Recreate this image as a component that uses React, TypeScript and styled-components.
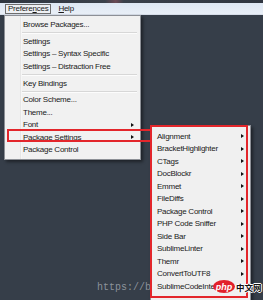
import React from 'react';
import styled, { createGlobalStyle } from 'styled-components';

const GlobalStyle = createGlobalStyle`
    html, body {
        margin: 0;
        padding: 0;
        background: #363e49;
    }
`;

const MENU_FONT = `'Liberation Sans', Arial, sans-serif`;

const Page = styled.div`
    position: relative;
    width: 263px;
    height: 300px;
    overflow: hidden;
    background: #363e49;
    font-family: ${MENU_FONT};
    font-size: 8px;
    letter-spacing: -0.25px;
    color: #1a1a1a;
`;

const TopStrip = styled.div`
    height: 3px;
    background: linear-gradient(90deg, #2f3640 0%, #3a414b 40%, #6b4a55 44%, #3a414b 47%, #2f3640 100%);
`;

const MenuBar = styled.div`
    display: flex;
    align-items: center;
    gap: 4px;
    height: 12px;
    padding-left: 5px;
    background: linear-gradient(#dde7f3, #e9eff7);
    border-bottom: 1px solid #d6dde8;
    box-sizing: border-box;
`;

const BarItem = styled.div<{ $open?: boolean }>`
    display: flex;
    align-items: center;
    height: 10px;
    padding: 0 2px;
    box-sizing: border-box;
    border: 1px solid ${(p) => (p.$open ? '#6e6e6e' : 'transparent')};
    background: ${(p) => (p.$open ? '#eef0f3' : 'transparent')};
    line-height: 8px;
    u {
        text-decoration: underline;
        text-underline-offset: 1px;
    }
`;

const Body = styled.div`
    position: relative;
    z-index: 1;
    display: flex;
    align-items: flex-start;
    padding-left: 4px;
`;

const Menu = styled.div<{ $width: number; $top: number; $left: number; $gutter?: boolean }>`
    display: flex;
    flex-direction: column;
    width: ${(p) => p.$width}px;
    margin-top: ${(p) => p.$top}px;
    margin-left: ${(p) => p.$left}px;
    box-sizing: border-box;
    border: 1px solid #8d9096;
    background: ${(p) =>
        p.$gutter
            ? 'linear-gradient(90deg, #f1f1f1 0, #f1f1f1 15px, #e6e6e6 15px, #e6e6e6 16px, #fbfbfb 16px, #f1f1f1 17px, #f1f1f1 100%)'
            : '#f0f0f0'};
    box-shadow: 2px 2px 3px rgba(0, 0, 0, 0.45);
`;

const MainList = styled.div`
    display: flex;
    flex-direction: column;
    padding: 2px 0 3px;
`;

const SubList = styled.div`
    display: flex;
    flex-direction: column;
    padding: 4px 0 20px;
`;

const Item = styled.div<{ $indent: number }>`
    display: flex;
    align-items: center;
    justify-content: space-between;
    height: 12.5px;
    padding-left: ${(p) => p.$indent}px;
    padding-right: 6px;
    white-space: nowrap;
`;

const Arrow = styled.span`
    width: 0;
    height: 0;
    border-top: 2.5px solid transparent;
    border-bottom: 2.5px solid transparent;
    border-left: 3px solid #111;
`;

const Separator = styled.div`
    height: 4.4px;
    display: flex;
    align-items: center;
    padding-left: 17px;
    padding-right: 3px;

    &::after {
        content: '';
        flex: 1;
        height: 1px;
        background: #d7d7d7;
        box-shadow: 0 1px 0 #fcfcfc;
    }
`;

const RedBox = styled.div<{ $x: number; $y: number; $w: number; $h: number }>`
    position: absolute;
    left: ${(p) => p.$x}px;
    top: ${(p) => p.$y}px;
    width: ${(p) => p.$w}px;
    height: ${(p) => p.$h}px;
    box-sizing: border-box;
    border: 2px solid #e3262b;
    pointer-events: none;
`;

const WatermarkUrl = styled.div`
    position: absolute;
    z-index: 0;
    left: 97px;
    top: 282px;
    font-family: 'Liberation Mono', monospace;
    font-size: 10px;
    letter-spacing: 0;
    color: rgba(170, 176, 184, 0.75);
    white-space: nowrap;
`;

const Logo = styled.div`
    position: absolute;
    z-index: 2;
    left: 213px;
    top: 280px;
    display: flex;
    align-items: center;
    gap: 1px;
`;

const PhpBadge = styled.span`
    display: flex;
    align-items: center;
    justify-content: center;
    width: 22px;
    height: 13px;
    border-radius: 50%;
    background: #e2212b;
    color: #fff;
    font-family: 'Liberation Sans', Arial, sans-serif;
    font-style: italic;
    font-weight: bold;
    font-size: 9px;
    letter-spacing: 0;
`;

const CnText = styled.span`
    font-family: 'Noto Sans CJK SC', sans-serif;
    font-weight: bold;
    font-size: 8.5px;
    line-height: 10px;
    letter-spacing: 0;
    color: #111;
    white-space: nowrap;
    text-shadow: 1px 0 0 #fff, -1px 0 0 #fff, 0 1px 0 #fff, 0 -1px 0 #fff;
`;

type Entry = { label: string; sub?: boolean } | 'sep';

const mainEntries: Entry[] = [
    { label: 'Browse Packages...' },
    'sep',
    { label: 'Settings' },
    { label: 'Settings – Syntax Specific' },
    { label: 'Settings – Distraction Free' },
    'sep',
    { label: 'Key Bindings' },
    'sep',
    { label: 'Color Scheme...' },
    { label: 'Theme...' },
    { label: 'Font', sub: true },
    { label: 'Package Settings', sub: true },
    { label: 'Package Control' },
];

const packages = [
    'Alignment',
    'BracketHighlighter',
    'CTags',
    'DocBlockr',
    'Emmet',
    'FileDiffs',
    'Package Control',
    'PHP Code Sniffer',
    'Side Bar',
    'SublimeLinter',
    'Themr',
    'ConvertToUTF8',
    'SublimeCodeIntel',
];

const App = () => {
    return (
        <Page>
            <GlobalStyle />
            <TopStrip />
            <MenuBar>
                <BarItem $open>
                    Prefere<u>n</u>ces
                </BarItem>
                <BarItem>
                    <u>H</u>elp
                </BarItem>
            </MenuBar>
            <Body>
                <Menu $width={137} $top={0} $left={0} $gutter>
                    <MainList>
                        {mainEntries.map((e, i) =>
                            e === 'sep' ? (
                                <Separator key={i} />
                            ) : (
                                <Item key={i} $indent={18}>
                                    {e.label}
                                    {e.sub && <Arrow />}
                                </Item>
                            )
                        )}
                    </MainList>
                </Menu>
                <Menu $width={101} $top={110} $left={9}>
                    <SubList>
                        {packages.map((p) => (
                            <Item key={p} $indent={6}>
                                {p}
                                <Arrow />
                            </Item>
                        ))}
                    </SubList>
                </Menu>
                <RedBox $x={7} $y={114} $w={145} $h={13} />
                <RedBox $x={150} $y={110} $w={98} $h={173} />
            </Body>
            <WatermarkUrl>https://blog.csdn.net/</WatermarkUrl>
            <Logo>
                <PhpBadge>php</PhpBadge>
                <CnText>中文网</CnText>
            </Logo>
        </Page>
    );
};

export default App;
